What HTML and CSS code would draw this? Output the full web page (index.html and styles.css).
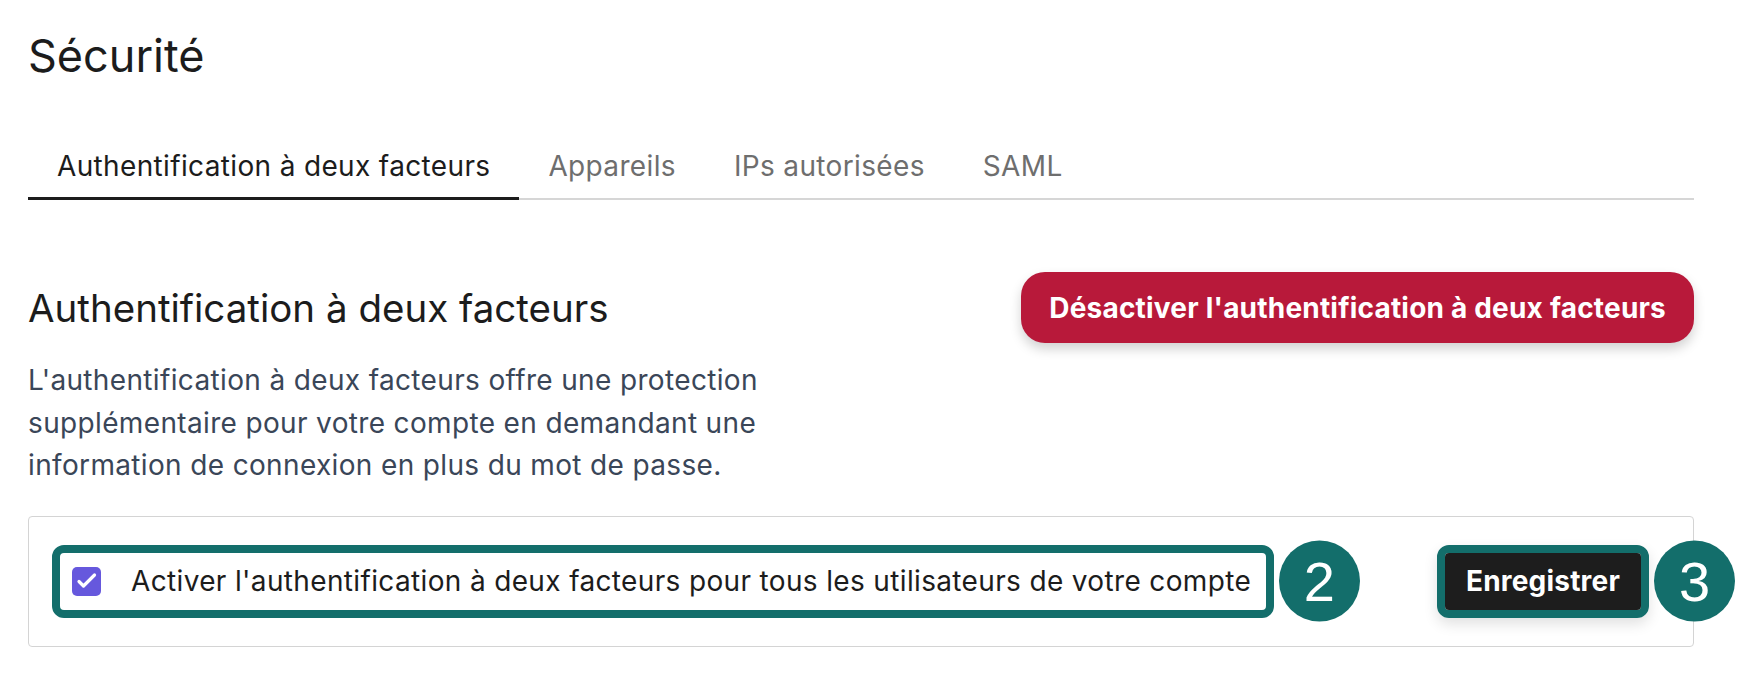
FILE: index.html
```html
<!DOCTYPE html>
<html lang="fr">
<head>
    <meta charset="UTF-8">
    <meta name="viewport" content="width=device-width, initial-scale=1.0">
    <title>Sécurité</title>
    <link rel="stylesheet" href="styles.css">
</head>
<body>
    <div class="page">
        <h1 class="page-title">Sécurité</h1>

        <nav class="tabs">
            <a class="tab active" href="#">Authentification à deux facteurs</a>
            <a class="tab" href="#">Appareils</a>
            <a class="tab" href="#">IPs autorisées</a>
            <a class="tab" href="#">SAML</a>
        </nav>

        <!-- Zone 2FA -->
        <section class="section">
            <div class="section-head">
                <h2 class="section-title">Authentification à deux facteurs</h2>
                <button class="btn-danger">Désactiver l'authentification à deux facteurs</button>
            </div>
            <p class="section-desc">L'authentification à deux facteurs offre une protection supplémentaire pour votre compte en demandant une information de connexion en plus du mot de passe.</p>

            <div class="card">
                <label class="callout check-row">
                    <span class="checkbox">
                        <svg width="29" height="29" viewBox="0 0 29 29"><path d="M7 14.5 L11.5 19 L22.5 8" fill="none" stroke="#fff" stroke-width="3.2" stroke-linecap="round" stroke-linejoin="round"/></svg>
                    </span>
                    <span>Activer l'authentification à deux facteurs pour tous les utilisateurs de votre compte</span>
                    <span class="badge">2</span>
                </label>
                <div class="callout save-wrap">
                    <button class="btn-dark">Enregistrer</button>
                    <span class="badge">3</span>
                </div>
            </div>
        </section>
    </div>
</body>
</html>
```

FILE: styles.css
```css
body {
    margin: 0;
    background: #fff;
    font-family: Inter, "Noto Sans", sans-serif;
    color: #1c1c1c;
}

.page {
    padding: 30px 52px 0 28px;
}

.page-title {
    margin: 0 0 68px;
    font-size: 45px;
    line-height: 52px;
    font-weight: 400;
}

/* Onglets */
.tabs {
    display: flex;
    border-bottom: 2px solid #d6d6d6;
}

.tab {
    padding: 0 29px 15px;
    margin-bottom: -2px;
    border-bottom: 3px solid transparent;
    font-size: 28px;
    line-height: 32px;
    letter-spacing: 0.35px;
    color: #6e6e6e;
    text-decoration: none;
}

.tab.active {
    color: #1c1c1c;
    border-bottom-color: #1c1c1c;
}

.section {
    margin-top: 72px;
}

.section-head {
    display: flex;
    align-items: center;
    justify-content: space-between;
}

.section-title {
    margin: 0;
    font-size: 38.5px;
    line-height: 44px;
    font-weight: 400;
}

.btn-danger {
    height: 71px;
    padding: 0 28px;
    border: none;
    border-radius: 24px;
    background: #b8193a;
    color: #fff;
    font-family: Inter, sans-serif;
    font-size: 28px;
    font-weight: 700;
    letter-spacing: 0.2px;
    box-shadow: 0 6px 12px rgba(0, 0, 0, 0.18);
}

.section-desc {
    margin: 16px 0 0;
    max-width: 790px;
    font-size: 28px;
    line-height: 42.5px;
    letter-spacing: 0.35px;
    color: #3a4658;
}

/* Carte d'options */
.card {
    margin-top: 29px;
    padding: 28px 44px 28px 23px;
    border: 1px solid #d4d4d4;
    border-radius: 4px;
    display: flex;
    align-items: center;
    justify-content: space-between;
}

.callout {
    position: relative;
    border: 8px solid #136e6b;
    border-radius: 12px;
}

.check-row {
    display: flex;
    align-items: center;
    gap: 30px;
    height: 57px;
    padding: 0 15px 0 12px;
    font-size: 28px;
    letter-spacing: 0.35px;
    color: #1c1c1c;
}

.checkbox {
    width: 29px;
    height: 29px;
    border-radius: 5px;
    background: #6658dd;
    display: flex;
}

.save-wrap {
    display: flex;
    box-shadow: 0 6px 14px rgba(0, 0, 0, 0.12);
}

.btn-dark {
    height: 57px;
    padding: 0 21px;
    border: none;
    border-radius: 4px;
    background: #1d1d1d;
    color: #fff;
    font-family: Inter, sans-serif;
    font-size: 28px;
    font-weight: 700;
    letter-spacing: 0.2px;
}

/* Pastilles numérotées */
.badge {
    position: absolute;
    top: 50%;
    left: calc(100% + 13px);
    transform: translateY(-50%);
    width: 81px;
    height: 81px;
    border-radius: 50%;
    background: #136e6b;
    color: #fff;
    font-family: "Liberation Sans", Arial, sans-serif;
    font-size: 56px;
    line-height: 81px;
    text-align: center;
}
```
